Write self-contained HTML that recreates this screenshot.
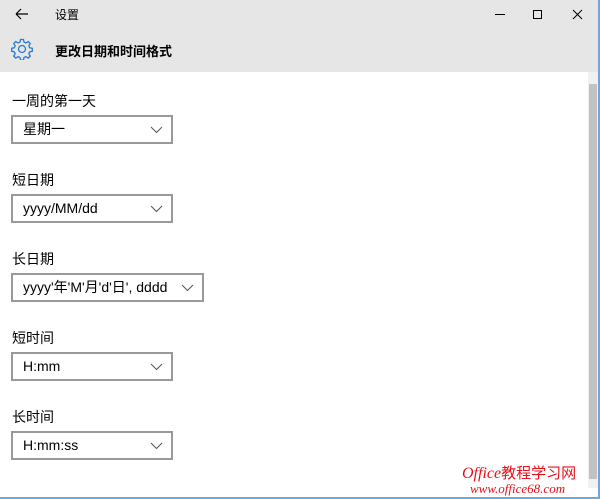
<!DOCTYPE html><html><head><meta charset="utf-8"><style>
body{margin:0;width:600px;height:499px;overflow:hidden;background:#fff;font-family:"Liberation Sans","Noto Sans CJK SC",sans-serif;position:relative}
.hd{position:absolute;left:0;top:0;width:600px;height:72px;background:#e6e6e6}
.t{position:absolute;font-size:12px;color:#000}
.lb{position:absolute;left:12px;font-size:14px;color:#000}
.dd{position:absolute;left:11px;height:25px;border:2px solid #999;font-size:14px;line-height:25px;padding-left:10px;box-sizing:content-box;width:148px}
.dd svg{position:absolute;right:8px;top:9px}
</style></head><body>
<div class="hd"></div>
<svg style="position:absolute;left:15px;top:8px" width="14" height="12"><path d="M1 6H13M1 6L6 1M1 6L6 11" stroke="#000" fill="none" stroke-width="1.2"/></svg>
<div class="t" style="left:55px;top:6px">设置</div>
<svg style="position:absolute;left:480px;top:0" width="110" height="30"><path d="M15 14.5H25" stroke="#000"/><rect x="53.5" y="10.5" width="8" height="8" stroke="#000" fill="none"/><path d="M93 10L102 19M102 10L93 19" stroke="#000"/></svg>
<svg style="position:absolute;left:11px;top:38px" width="22" height="22" viewBox="0 0 22 22"><g stroke="#2a7bd4" fill="none" stroke-width="1.3"><circle cx="11" cy="11" r="3.5"/><path d="M9.5 1.5h3l.5 2.6 2 .9 2.2-1.5 2.1 2.1-1.5 2.2.9 2 2.6.5v3l-2.6.5-.9 2 1.5 2.2-2.1 2.1-2.2-1.5-2 .9-.5 2.6h-3l-.5-2.6-2-.9-2.2 1.5-2.1-2.1 1.5-2.2-.9-2-2.6-.5v-3l2.6-.5.9-2-1.5-2.2 2.1-2.1 2.2 1.5 2-.9z"/></g></svg>
<div class="t" style="left:55px;top:41px;font-size:13px;font-weight:bold">更改日期和时间格式</div>
<div style="position:absolute;left:588px;top:72px;width:10px;height:416px;background:#f0f0f0"></div>
<div style="position:absolute;left:589px;top:84px;width:8px;height:395px;background:#c2c2c2"></div>
<div style="position:absolute;left:598px;top:0;width:2px;height:499px;background:#6fa6dd"></div>
<div style="position:absolute;left:0;top:497px;width:600px;height:2px;background:#6fa6dd"></div>
<div class="lb" style="top:91px">一周的第一天</div>
<div class="dd" style="top:115px">星期一<svg width="13" height="8"><path d="M1 1L6.5 6.5L12 1" stroke="#555" fill="none"/></svg></div>
<div class="lb" style="top:170px">短日期</div>
<div class="dd" style="top:194px">yyyy/MM/dd<svg width="13" height="8"><path d="M1 1L6.5 6.5L12 1" stroke="#555" fill="none"/></svg></div>
<div class="lb" style="top:249px">长日期</div>
<div class="dd" style="top:273px;width:179px">yyyy'年'M'月'd'日', dddd<svg width="13" height="8"><path d="M1 1L6.5 6.5L12 1" stroke="#555" fill="none"/></svg></div>
<div class="lb" style="top:328px">短时间</div>
<div class="dd" style="top:352px">H:mm<svg width="13" height="8"><path d="M1 1L6.5 6.5L12 1" stroke="#555" fill="none"/></svg></div>
<div class="lb" style="top:407px">长时间</div>
<div class="dd" style="top:431px">H:mm:ss<svg width="13" height="8"><path d="M1 1L6.5 6.5L12 1" stroke="#555" fill="none"/></svg></div>
<div style="position:absolute;left:462px;top:462px;color:#e8101a;font-family:'Liberation Serif',serif;font-style:italic;font-size:16px">Office<span style="font-family:'Noto Sans CJK SC';font-style:normal;font-size:15px">教程学习网</span></div>
<div style="position:absolute;left:470px;top:481px;color:#e8101a;font-family:'Liberation Serif',serif;font-style:italic;font-size:13px">www.office68.com</div>
</body></html>
